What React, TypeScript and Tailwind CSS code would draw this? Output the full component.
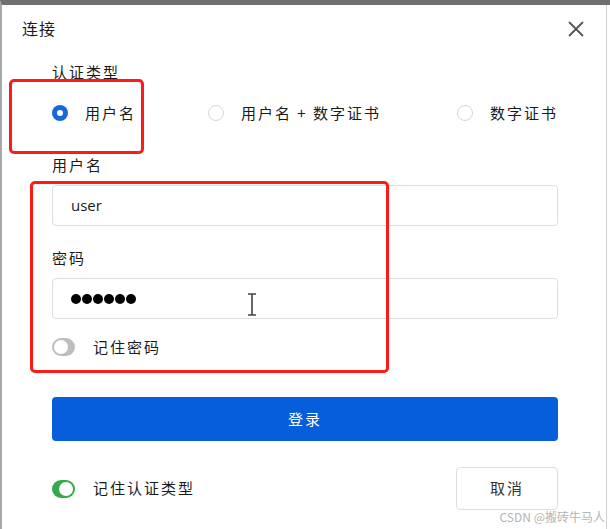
import React from "react";

const cjk = { fontFamily: '"Noto Sans CJK SC", "Noto Sans", sans-serif' };

function Radio({ checked, label }: { checked?: boolean; label: string }) {
  return (
    <div className="flex items-center">
      {checked ? (
        <span className="w-4 h-4 rounded-full bg-[#1668dc] flex items-center justify-center">
          <span className="w-[6px] h-[6px] rounded-full bg-white" />
        </span>
      ) : (
        <span className="w-4 h-4 rounded-full border border-[#d6d6d6] bg-white" />
      )}
      <span className="ml-[17px] text-[15px] tracking-[2px] text-[#1a1a1a]">{label}</span>
    </div>
  );
}

function Toggle({ on }: { on?: boolean }) {
  return (
    <span
      className={`w-[23px] h-[18px] rounded-full flex items-center px-[2px] ${
        on ? "bg-[#35a84a] justify-end" : "bg-[#bdbdbd] justify-start"
      }`}
    >
      <span className="w-[14px] h-[14px] rounded-full bg-white" />
    </span>
  );
}

export default function App() {
  return (
    <div
      className="relative w-[610px] h-[529px] bg-white overflow-hidden border-t-[5px] border-t-[#707070] border-l-2 border-l-[#a8a8a8]"
      style={cjk}
    >
      {/* right frame line */}
      <div className="absolute top-0 bottom-0 left-[604px] w-px bg-[#cfcfcf]" />

      {/* HEADER */}
      <div className="h-[46px] flex items-center justify-between pl-[20px] pr-[26px]">
        <span className="text-[16px] tracking-[1px] text-[#1a1a1a]">连接</span>
        <svg width="16" height="16" viewBox="0 0 16 16" className="mt-[1px]">
          <path d="M1.5 1.5 L14.5 14.5 M14.5 1.5 L1.5 14.5" stroke="#555" strokeWidth="1.8" strokeLinecap="round" />
        </svg>
      </div>

      {/* CONTENT */}
      <div className="pl-[50px] pr-[52px]">
        <div className="mt-[11px] h-[20px] flex items-center text-[15px] tracking-[2px] text-[#1a1a1a]">认证类型</div>

        <div className="mt-[21px] h-[20px] flex items-center justify-between">
          <Radio checked label="用户名" />
          <div className="ml-[-4px]">
            <Radio label="用户名 + 数字证书" />
          </div>
          <Radio label="数字证书" />
        </div>

        <div className="mt-[32px] h-[20px] flex items-center text-[15px] tracking-[2px] text-[#1a1a1a]">用户名</div>
        <div className="mt-[10px] h-[41px] rounded-[4px] border border-[#dedede] flex items-center pl-[18px]">
          <span className="text-[15px] text-[#1a1a1a]" style={{ fontFamily: '"Open Sans", sans-serif' }}>user</span>
        </div>

        <div className="mt-[22px] h-[20px] flex items-center text-[15px] tracking-[2px] text-[#1a1a1a]">密码</div>
        <div className="mt-[10px] h-[41px] rounded-[4px] border border-[#dedede] flex items-center pl-[18px] gap-[1px]">
          {[0, 1, 2, 3, 4, 5].map((i) => (
            <span key={i} className="w-[10px] h-[10px] rounded-full bg-black" />
          ))}
        </div>

        <div className="mt-[18px] h-[20px] flex items-center">
          <Toggle />
          <span className="ml-[18px] text-[15px] tracking-[2px] text-[#1a1a1a]">记住密码</span>
        </div>

        <div className="mt-[40px] h-[44px] rounded-[4px] bg-[#065edb] flex items-center justify-center text-white text-[15px] tracking-[2px]">
          登录
        </div>

        <div className="mt-[26px] h-[43px] flex items-center justify-between">
          <div className="flex items-center">
            <Toggle on />
            <span className="ml-[18px] text-[15px] tracking-[2px] text-[#1a1a1a]">记住认证类型</span>
          </div>
          <div className="w-[102px] h-[43px] rounded-[4px] border border-[#dedede] flex items-center justify-center text-[15px] tracking-[2px] text-[#333]">
            取消
          </div>
        </div>
      </div>

      {/* WATERMARK */}
      <div className="absolute right-[5px] bottom-[3px] text-[12px] text-[#b5b5b5]">CSDN @搬砖牛马人</div>

      {/* TEXT CURSOR */}
      <svg className="absolute left-[244px] top-[288px]" width="12" height="23" viewBox="0 0 12 23">
        <path d="M2 1 H10 M6 1 V22 M2 22 H10" stroke="#444" strokeWidth="1.6" />
      </svg>

      {/* ANNOTATION BOXES */}
      <div className="absolute left-[7px] top-[74px] w-[135px] h-[75px] border-[3px] border-[#ff1a1a] rounded-[5px]" />
      <div className="absolute left-[28px] top-[176px] w-[359px] h-[192px] border-[3px] border-[#ff1a1a] rounded-[5px]" />
    </div>
  );
}
